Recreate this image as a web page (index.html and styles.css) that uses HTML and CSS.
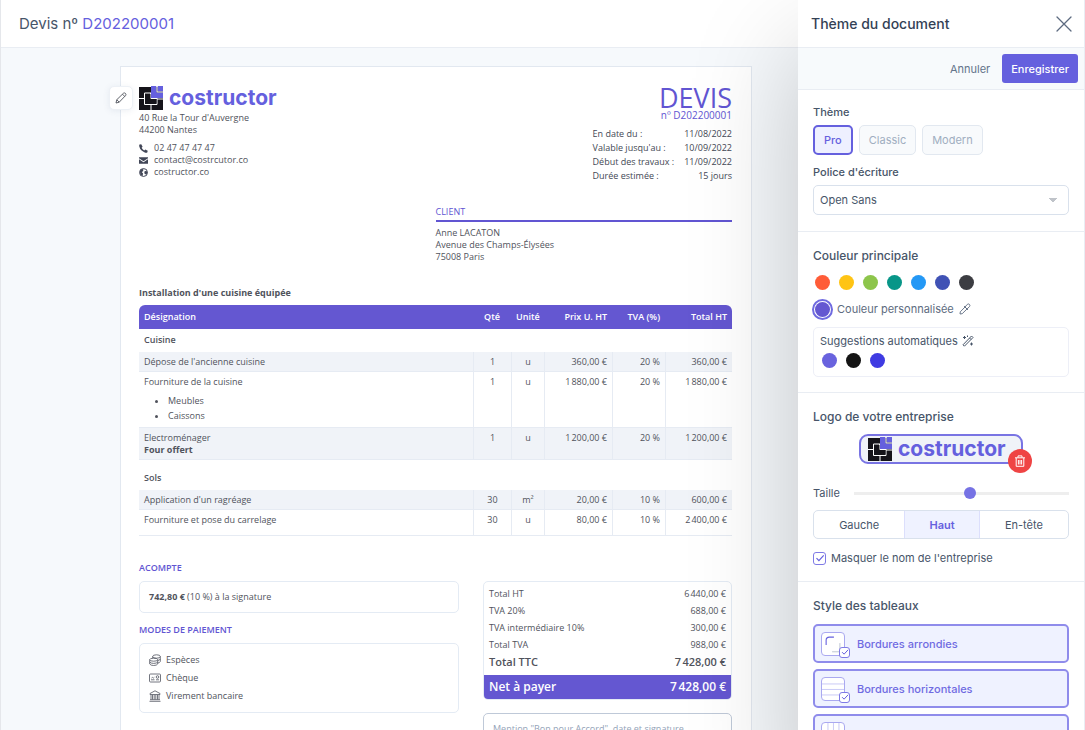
FILE: index.html
```html
<!DOCTYPE html>
<html lang="fr">
<head>
<meta charset="utf-8">
<title>Devis nº D202200001</title>
<link rel="stylesheet" href="styles.css">
</head>
<body>
<svg class="sprite" aria-hidden="true">
  <symbol id="logo" viewBox="0 0 24 24">
    <rect x="0" y="1" width="24" height="23" fill="#15141a"/>
    <path d="M5.500 7H18v11.500H5.500zM0 12.500h5.500M12 18.500V24M18 13h6M11.500 7v5.500H18" fill="none" stroke="#fff" stroke-width="1"/>
    <path d="M6.500 8h5v5h6v4.500h-11z" fill="#15141a"/>
    <path d="M12 0h5.500v6.500H24V12H12zM18.500 0H24v5.500h-5.500z" fill="#6560de"/>
    <path d="M18 0v6h6" fill="none" stroke="#fff"/>
  </symbol>
  <symbol id="check" viewBox="0 0 12 12"><path d="M2.500 6.200l2.400 2.400 4.800-5.200" fill="none" stroke="#6560de" stroke-width="1.200"/></symbol>
  <symbol id="pencil" viewBox="0 0 12 12"><path d="M1 11l.8-3.300L8.500 1.200c1.300-1 3.200.8 2.200 2.200L4.200 10.200zM7.500 2.200l2.200 2.200M1.800 7.700l2.400 2.500" fill="none" stroke="currentColor" stroke-width=".9" stroke-linejoin="round"/></symbol>
</svg>
<div class="app">
  <main class="main">
    <header class="topbar"><h1>Devis nº <a href="#devis">D202200001</a></h1></header>
    <div class="canvas">
      <article class="sheet" id="devis">
        <button class="edit" aria-label="Modifier"><svg width="12" height="12"><use href="#pencil"/></svg></button>
        <section class="head">
          <div class="company">
            <div class="brand"><svg width="24" height="24"><use href="#logo"/></svg><span>costructor</span></div>
            <p>40 Rue la Tour d'Auvergne<br>44200 Nantes</p>
            <ul class="contacts">
              <li><svg width="9" height="9" viewBox="0 0 10 10"><path d="M2.500.3L4 3 2.900 4.200Q3.800 6.200 5.800 7.100L7 6l2.700 1.500L9.200 9.500Q8.500 10 7 9.600 1.500 7.600.3 2.800 0 .8.600.600z" fill="#414657"/></svg>02 47 47 47 47</li>
              <li><svg width="9" height="9" viewBox="0 0 10 10"><path d="M0 1.500h10v1L5 5.800 0 2.500z M0 3.700l5 3.300 5-3.300v5H0z" fill="#414657"/></svg>contact@costrcutor.co</li>
              <li><svg width="9" height="9" viewBox="0 0 10 10"><circle cx="5" cy="5" r="4.400" fill="none" stroke="#414657" stroke-width="1.100"/><path d="M1 3l2-2 2 .5-.5 2L3 4.500l1.500 1.500L4 9 1.500 7.500zM6 4l2-1 1.500 2L8 7.500 6 6z" fill="#414657"/></svg>costructor.co</li>
            </ul>
          </div>
          <div class="meta">
            <h2>DEVIS</h2>
            <div class="num">nº D202200001</div>
            <dl>
              <dt>En date du :</dt><dd>11/08/2022</dd>
              <dt>Valable jusqu'au :</dt><dd>10/09/2022</dd>
              <dt>Début des travaux :</dt><dd>11/09/2022</dd>
              <dt>Durée estimée :</dt><dd>15 jours</dd>
            </dl>
          </div>
        </section>
        <section class="client">
          <h3>CLIENT</h3>
          <p>Anne LACATON<br>Avenue des Champs-Élysées<br>75008 Paris</p>
        </section>
        <h3 class="subject">Installation d'une cuisine équipée</h3>
        <table class="lines">
          <colgroup><col><col class="c-qty"><col class="c-unit"><col class="c-price"><col class="c-tax"><col class="c-total"></colgroup>
          <thead><tr><th>Désignation</th><th class="c">Qté</th><th class="c">Unité</th><th class="r">Prix U. HT</th><th class="r">TVA (%)</th><th class="r">Total HT</th></tr></thead>
          <tbody>
            <tr class="group"><th colspan="6">Cuisine</th></tr>
            <tr class="alt"><td>Dépose de l'ancienne cuisine</td><td>1</td><td>u</td><td>360,00 €</td><td>20 %</td><td>360,00 €</td></tr>
            <tr><td>Fourniture de la cuisine<ul><li>Meubles</li><li>Caissons</li></ul></td><td>1</td><td>u</td><td>1&#8239;880,00 €</td><td>20 %</td><td>1&#8239;880,00 €</td></tr>
            <tr class="alt last"><td>Electroménager<br><b>Four offert</b></td><td>1</td><td>u</td><td>1&#8239;200,00 €</td><td>20 %</td><td>1&#8239;200,00 €</td></tr>
            <tr class="group spaced"><th colspan="6">Sols</th></tr>
            <tr class="alt"><td>Application d'un ragréage</td><td>30</td><td>m²</td><td>20,00 €</td><td>10 %</td><td>600,00 €</td></tr>
            <tr class="last"><td>Fourniture et pose du carrelage</td><td>30</td><td>u</td><td>80,00 €</td><td>10 %</td><td>2&#8239;400,00 €</td></tr>
          </tbody>
        </table>
        <section class="foot">
          <div class="pay">
            <h3>ACOMPTE</h3>
            <div class="box"><b>742,80 €</b> (10 %) à la signature</div>
            <h3>MODES DE PAIEMENT</h3>
            <ul class="box modes">
              <li><svg width="12" height="12" viewBox="0 0 12 12"><g fill="none" stroke="#505460" stroke-width=".8"><ellipse cx="7.500" cy="2.500" rx="3.800" ry="1.700"/><path d="M11.300 2.500v5q-.5 1.200-2.300 1.500M11.300 5q-.5 1.200-2.300 1.500M3.700 2.500v1.700"/><ellipse cx="4.700" cy="5.700" rx="4" ry="1.500"/><path d="M.7 5.700V10q1 1.500 4 1.500t4-1.500V5.700M.7 8q1 1.400 4 1.400T8.700 8"/></g></svg>Espèces</li>
              <li><svg width="12" height="12" viewBox="0 0 12 12"><g fill="none" stroke="#505460" stroke-width=".8"><rect x=".5" y="2" width="11" height="8" rx="1"/><circle cx="8.500" cy="5" r="1.300"/><path d="M2 7.800h3.500M7 7.800h3M2.500 6l1-.6.8.7 1-.8"/></g></svg>Chèque</li>
              <li><svg width="12" height="12" viewBox="0 0 12 12"><path d="M6 .8l5 2.700v1H1v-1zM2 5v4.500M3.500 5v4.500M5.200 5v4.500M6.800 5v4.500M8.500 5v4.500M10 5v4.500M1 9.700h10M.5 11.300h11" fill="none" stroke="#505460" stroke-width=".8"/></svg>Virement bancaire</li>
            </ul>
          </div>
          <div class="sum">
            <dl class="totals">
              <div><dt>Total HT</dt><dd>6&#8239;440,00 €</dd></div>
              <div><dt>TVA 20%</dt><dd>688,00 €</dd></div>
              <div><dt>TVA intermédiaire 10%</dt><dd>300,00 €</dd></div>
              <div><dt>Total TVA</dt><dd>988,00 €</dd></div>
              <div class="ttc"><dt>Total TTC</dt><dd>7&#8239;428,00 €</dd></div>
              <div class="net"><dt>Net à payer</dt><dd>7&#8239;428,00 €</dd></div>
            </dl>
            <div class="sign">Mention "Bon pour Accord", date et signature</div>
          </div>
        </section>
      </article>
    </div>
  </main>
  <aside class="panel">
    <header class="panel-head"><h2>Thème du document</h2>
      <button class="close" aria-label="Fermer"><svg width="16" height="16" viewBox="0 0 16 16"><path d="M1 1l14 14M15 1L1 15" stroke="#5d6b80" stroke-width="1.300" stroke-linecap="round"/></svg></button></header>
    <div class="actions"><button class="cancel">Annuler</button><button class="save">Enregistrer</button></div>
    <section class="block theme">
      <div class="label">Thème</div>
      <div class="themes"><button class="on">Pro</button><button>Classic</button><button>Modern</button></div>
      <label class="label" for="font">Police d'écriture</label>
      <select id="font"><option>Open Sans</option></select>
    </section>
    <section class="block colors">
      <h3>Couleur principale</h3>
      <div class="dots"><button class="dot orange" aria-label="Orange"></button><button class="dot yellow" aria-label="Jaune"></button><button class="dot green" aria-label="Vert"></button><button class="dot teal" aria-label="Sarcelle"></button><button class="dot blue" aria-label="Bleu"></button><button class="dot indigo" aria-label="Indigo"></button><button class="dot grey" aria-label="Gris"></button></div>
      <button class="custom"><span class="dot violet"></span>Couleur personnalisée <svg width="12" height="12" viewBox="0 0 12 12"><path d="M1 11l.3-2.200L6 4l2 2-4.800 4.700zM5 3l4 4M6 4l2.300-2.600c1.400-1.400 3.600.7 2.200 2.200L8 6" fill="none" stroke="currentColor" stroke-width=".9" stroke-linejoin="round"/></svg></button>
      <div class="suggest">
        <div>Suggestions automatiques <svg width="12" height="12" viewBox="0 0 12 12"><path d="M1 9.800L9.500 1l1.500 1.500L2.400 11.200zM7.500 3l1.500 1.500M2.500 1v3M1 2.500h3M5.500.5v1.500M9.500 7.500v3M8 9h3" fill="none" stroke="currentColor"/></svg></div>
        <div class="dots"><button class="dot s1" aria-label="Violet"></button><button class="dot s2" aria-label="Noir"></button><button class="dot s3" aria-label="Bleu vif"></button></div>
      </div>
    </section>
    <section class="block logo">
      <h3>Logo de votre entreprise</h3>
      <div class="logo-box"><div class="brand"><svg width="24" height="24"><use href="#logo"/></svg><span>costructor</span></div>
        <button class="trash" aria-label="Supprimer"><svg width="12" height="12" viewBox="0 0 12 12"><path d="M1 2.800h10M4 2.500V.9h4v1.600M2.200 3v8.300h7.600V3M4.400 5v4.500M6 5v4.500M7.600 5v4.500" fill="none" stroke="#fff" stroke-width="1"/></svg></button></div>
      <div class="size"><label for="size">Taille</label><input type="range" id="size" min="0" max="100" value="54"></div>
      <div class="segments">
        <label><input type="radio" name="pos"><span>Gauche</span></label><label><input type="radio" name="pos" checked><span>Haut</span></label><label><input type="radio" name="pos"><span>En-tête</span></label>
      </div>
      <label class="tick"><span class="checkbox"><input type="checkbox" checked><svg width="12" height="12"><use href="#check"/></svg></span>Masquer le nom de l'entreprise</label>
    </section>
    <section class="block tables">
      <h3>Style des tableaux</h3>
      <label class="option"><span class="thumb"><svg width="24" height="24" viewBox="0 0 24 24"><path d="M4.500 13V8q0-3.500 3.500-3.500h5" fill="none" stroke="#6560de" stroke-width="1.200"/><path d="M11 20.500h8.500V11" fill="none" stroke="#b9c2d0"/></svg><span class="checkbox"><input type="checkbox" checked><svg width="10" height="10"><use href="#check"/></svg></span></span>Bordures arrondies</label>
      <label class="option"><span class="thumb"><svg width="24" height="24" viewBox="0 0 24 24"><path d="M0 6.500h24M0 12.500h24M0 18.500h24" stroke="#c5c6f5"/></svg><span class="checkbox"><input type="checkbox" checked><svg width="10" height="10"><use href="#check"/></svg></span></span>Bordures horizontales</label>
      <label class="option"><span class="thumb"><svg width="24" height="24" viewBox="0 0 24 24"><path d="M6.500 0v24M12.500 0v24M18.500 0v24" stroke="#c5c6f5"/></svg><span class="checkbox"><input type="checkbox" checked><svg width="10" height="10"><use href="#check"/></svg></span></span></label>
    </section>
  </aside>
</div>
</body>
</html>
```
FILE: styles.css
```css
* { box-sizing: border-box; }
body, h1, h2, h3, p, ul, dl, dd { margin: 0; padding: 0; }
ul { list-style: none; }
body { font-family: Inter, sans-serif; font-size: 11px; color: #475569; overflow: hidden; }
button { font: inherit; color: inherit; background: none; border: 0; padding: 0; cursor: pointer; }
svg { flex: none; display: block; }
.sprite { position: absolute; width: 0; height: 0; }

.app { display: grid; grid-template-columns: minmax(0, 1fr) 287px; height: 100vh; }
.main { border-left: 1px solid #e5e7eb; background: #f6f9fc; overflow: hidden; }
.topbar { height: 48px; display: flex; align-items: center; padding: 0 18px; background: #fff; border-bottom: 1px solid #e9edf3; }
.topbar h1 { font-size: 15px; font-weight: 400; }
.topbar a { color: #6560de; text-decoration: none; }
.canvas { padding: 18px 46px 0 119px; }

.sheet { position: relative; background: #fff; border: 1px solid #e2e8f0; padding: 19px 19px 60px 18px; min-height: 800px; font-family: "Open Sans", sans-serif; font-size: 9px; line-height: 12px; color: #50535c; }
.edit { position: absolute; left: -12px; top: 19px; width: 24px; height: 24px; display: grid; place-items: center; background: #fff; border: 1px solid #edf1f6; border-radius: 5px; box-shadow: 0 1px 6px rgba(80, 100, 140, .1); }
.brand { display: flex; align-items: center; gap: 6px; height: 24px; font: 700 21px/24px Inter, sans-serif; color: #6560de; }
.head { display: flex; justify-content: space-between; }
.company p { margin-top: 2px; }
.contacts { margin-top: 6px; }
.contacts li { display: flex; align-items: center; gap: 6px; }
.meta { display: flex; flex-direction: column; align-items: flex-end; }
.meta h2 { font-size: 27px; line-height: 23px; font-weight: 400; color: #6155d2; }
.meta .num { font-size: 10px; line-height: 13px; color: #6155d2; }
.meta dl { display: grid; grid-template-columns: auto auto; column-gap: 10px; line-height: 14px; margin-top: 5px; color: #434854; }
.meta dd { text-align: right; }
.client { width: 50%; margin-left: auto; margin-top: 23px; }
.client h3 { font-size: 9px; font-weight: 400; line-height: 12px; color: #6155d2; padding-bottom: 2px; border-bottom: 2px solid #6155d2; margin-bottom: 5px; }
.subject { font-size: 9px; font-weight: 700; line-height: 12px; margin-top: 24px; margin-bottom: 6px; }

.lines { width: 100%; table-layout: fixed; border-collapse: separate; border-spacing: 0; font-size: 9px; line-height: 12px; }
.c-qty { width: 38px; } .c-unit { width: 33px; } .c-price { width: 68px; } .c-tax { width: 53px; } .c-total { width: 67px; }
.lines th, .lines td { padding: 4px 5px 3px; vertical-align: top; text-align: left; }
.lines thead th { background: #6457d1; color: #fff; font-weight: 600; padding: 6px 5px; white-space: nowrap; }
.lines thead th:first-child { border-radius: 6px 0 0; }
.lines thead th:last-child { border-radius: 0 6px 0 0; }
.lines thead .c { text-align: center; }
.lines thead .r { text-align: right; }
.lines .group th { font-weight: 600; padding: 5px 5px 6px; }
.lines .spaced th { padding-top: 12px; }
.lines td { border-bottom: 1px solid #e6ebf3; }
.lines td + td { border-left: 1px solid #e6ebf3; text-align: right; }
.lines td:nth-child(2), .lines td:nth-child(3) { text-align: center; }
.lines .alt td { background: #f0f3f8; }
.lines .last td { padding-bottom: 9px; }
.lines .alt.last td { padding-bottom: 3px; }
.lines ul { list-style: disc; padding: 5px 0 1px 24px; line-height: 15px; }

.foot { display: grid; grid-template-columns: 320px minmax(0, 1fr); gap: 24px; margin-top: 26px; }
.foot h3 { font-size: 9px; font-weight: 600; line-height: 12px; color: #6155d2; margin-bottom: 7px; }
.box { border: 1px solid #e4ebf4; border-radius: 5px; padding: 9px; margin-bottom: 11px; }
.modes { padding: 7px 9px; }
.modes li { display: flex; align-items: center; gap: 5px; line-height: 18px; }
.sum { padding-top: 19px; }
.totals { border: 1px solid #e4ebf4; border-radius: 5px; overflow: hidden; padding-top: 3px; }
.totals div { display: flex; justify-content: space-between; padding: 0 5px; line-height: 17px; }
.totals .ttc { font-size: 11px; font-weight: 600; line-height: 18px; padding-bottom: 4px; }
.totals .net { background: #6457d1; color: #fff; font-size: 12px; font-weight: 600; line-height: 24px; }
.sign { margin-top: 13px; border: 1px solid #bfc9d8; border-radius: 5px; padding: 9px; height: 70px; color: #94a3b8; }

.panel { position: relative; z-index: 1; background: #fff; border-right: 1px solid #e9edf3; box-shadow: 0 50px 110px rgba(0, 0, 0, .22); }
.panel-head { display: flex; align-items: center; justify-content: space-between; height: 48px; padding: 0 12px 0 13px; border-bottom: 1px solid #e9edf3; }
.panel-head h2 { font-size: 14px; font-weight: 500; color: #334155; }
.actions { display: flex; justify-content: flex-end; align-items: center; gap: 12px; height: 42px; padding: 0 6px; background: #f7fafc; border-bottom: 1px solid #e9edf3; }
.cancel { color: #64748b; }
.save { background: #6560de; color: #fff; height: 29px; padding: 0 9px; border-radius: 3px; font-weight: 500; }
.block { padding: 15px 15px 16px; border-bottom: 1px solid #e9edf3; }
.block h3 { font-size: 12px; line-height: 18px; font-weight: 500; }
.label { display: block; line-height: 14px; font-weight: 500; }
.themes { display: flex; gap: 6px; margin: 6px 0 10px; }
.themes button { height: 30px; padding: 0 9px; border: 1px solid #e2e8f0; border-radius: 5px; background: #f8fafc; color: #a0aec0; }
.themes .on { border: 2px solid #6560de; background: #eef0ff; color: #6560de; font-weight: 500; }
select { display: block; width: 100%; height: 30px; margin-top: 6px; padding: 0 6px; border: 1px solid #d9e1ec; border-radius: 5px; font: inherit; color: #475569; appearance: none; background: conic-gradient(from -45deg at 50% 4px, #bfc3c9 90deg, transparent 0) no-repeat right 11px center / 8px 4px #fff; }
.dots { display: flex; gap: 9px; }
.dot { width: 15px; height: 15px; border-radius: 50%; display: block; flex: none; }
.colors { padding-bottom: 15px; }
.colors .dots { padding-left: 2px; }
.colors > .dots { margin: 10px 0 9px; }
.orange { background: #ff5c38; } .yellow { background: #ffc414; } .green { background: #8dc54b; } .teal { background: #089688; }
.blue { background: #2498f5; } .indigo { background: #4052b5; } .grey { background: #3c3d42; }
.violet { background: #6457d1; outline: 2px solid #6f6ae0; outline-offset: 1px; margin: 0 2px; }
.s1 { background: #6963de; } .s2 { background: #141414; } .s3 { background: #3f3be2; }
.custom { display: flex; align-items: center; gap: 5px; height: 20px; color: #5d6b80; }
.suggest { margin-top: 8px; border: 1px solid #edeff7; border-radius: 5px; padding: 5px 6px 8px; line-height: 16px; }
.suggest > div:first-child { display: flex; align-items: center; gap: 4px; }
.suggest .dots { margin-top: 4px; }
.logo-box { position: relative; width: 164px; margin: 8px auto 0; padding: 1px 7px; height: 30px; background: #f0f3f8; border: 2px solid #7974e3; border-radius: 9px; }
.trash { position: absolute; right: -11px; bottom: -11px; width: 24px; height: 24px; border-radius: 50%; background: #ef4444; display: grid; place-items: center; }
.size { display: flex; align-items: center; gap: 14px; height: 18px; margin: 20px 0 8px; }
.size input { flex: 1; min-width: 0; margin: 0; appearance: none; height: 12px; background: linear-gradient(#eee, #eee) center / 100% 3px no-repeat; }
.size input::-webkit-slider-thumb { appearance: none; width: 12px; height: 12px; border-radius: 50%; background: #7672e4; }
.segments { display: flex; border: 1px solid #d9e1ec; border-radius: 5px; height: 29px; overflow: hidden; }
.segments label { flex: 1 1 auto; white-space: nowrap; }
.segments input { position: absolute; opacity: 0; }
.segments span { display: flex; height: 100%; padding: 0 20px; align-items: center; justify-content: center; }
.segments input:checked + span { background: #eff2ff; color: #6560de; font-weight: 600; box-shadow: inset 1px 0 #dcdffc, inset -1px 0 #dcdffc; }
.tick { display: flex; align-items: center; gap: 5px; margin-top: 12px; line-height: 14px; }
.checkbox { position: relative; width: 13px; height: 13px; flex: none; display: grid; place-items: center; }
.checkbox input { appearance: none; position: absolute; inset: 0; margin: 0; border: 1px solid #7f7be6; border-radius: 3px; background: #fff; }
.checkbox svg { position: relative; }
.tables { border: 0; }
.option { display: flex; align-items: center; gap: 12px; height: 39px; padding: 0 6px; margin-top: 6px; border: 2px solid #8f8ceb; border-radius: 5px; background: #eff2ff; color: #6f6be2; font-weight: 500; }
.tables h3 { margin-bottom: 9px; }
.thumb { position: relative; width: 24px; height: 24px; border: 1px solid #aaa9f0; border-radius: 4px; background: #fff; }
.thumb > svg { width: 100%; height: 100%; }
.thumb .checkbox { position: absolute; right: -6px; bottom: -3px; width: 11px; height: 11px; }
```
